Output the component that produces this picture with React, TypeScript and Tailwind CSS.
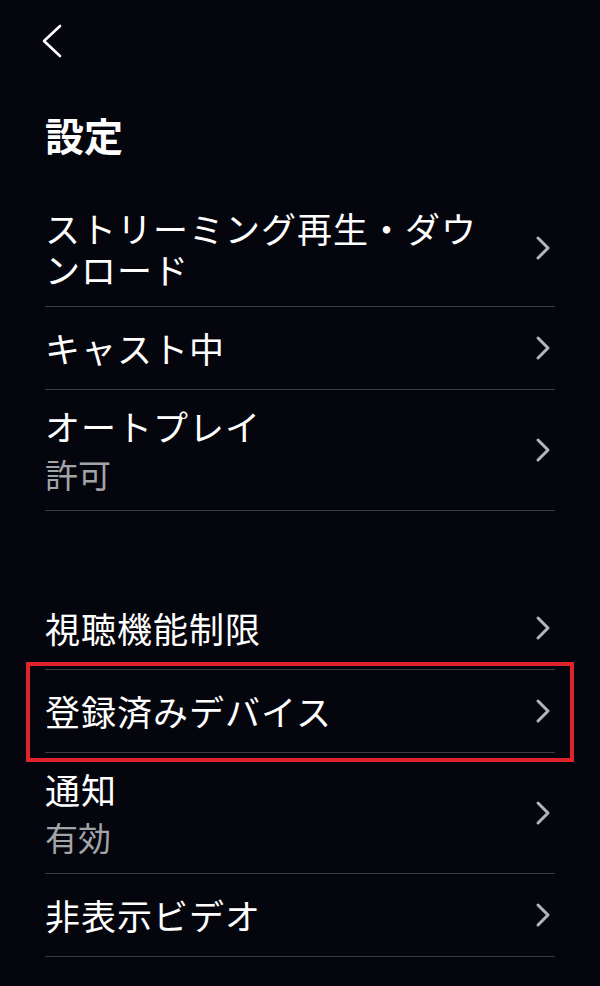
import type { ReactNode } from 'react';

type Row = {
  title: ReactNode;
  sub?: string;
  highlight?: boolean;
};

const groupA: Row[] = [
  { title: <>ストリーミング再生・ダウ<br />ンロード</> },
  { title: 'キャスト中' },
  { title: 'オートプレイ', sub: '許可' },
];

const groupB: Row[] = [
  { title: '視聴機能制限' },
  { title: '登録済みデバイス', highlight: true },
  { title: '通知', sub: '有効' },
  { title: '非表示ビデオ' },
];

function Chevron() {
  return (
    <svg width="16" height="26" viewBox="0 0 16 26" className="shrink-0 mr-[4px]" fill="none">
      <path d="M3 3 L13 13 L3 23" stroke="#b4b5b8" strokeWidth="3" strokeLinecap="round" strokeLinejoin="round" />
    </svg>
  );
}

function SettingRow({ row, first }: { row: Row; first?: boolean }) {
  const multi = !!row.sub;
  const pad = first ? 'pt-[16px] pb-[17px]' : multi ? 'py-[15px]' : 'pt-[20px] pb-[21px]';
  return (
    <div className="relative">
      <div className={`flex items-center justify-between border-b border-[#3a3c43] ${pad}`}>
        <div className="flex flex-col">
          <span className="text-[35px] leading-[41px] tracking-[1px] text-white">{row.title}</span>
          {row.sub && <span className="mt-2 text-[33px] leading-[41px] text-[#a3a4a8]">{row.sub}</span>}
        </div>
        <Chevron />
      </div>
      {row.highlight && (
        <div className="absolute -top-[8px] -bottom-[9px] -left-[19px] -right-[19px] border-4 border-[#e0222c] pointer-events-none" />
      )}
    </div>
  );
}

export default function App() {
  return (
    <div
      className="min-h-[986px] w-[600px] bg-[#05060d] px-[45px] overflow-hidden"
      style={{ fontFamily: '"Noto Sans CJK JP", "Noto Sans", sans-serif' }}
    >
      {/* Back */}
      <div className="pt-[24px] -ml-[3px]">
        <svg width="20" height="34" viewBox="0 0 20 34" fill="none">
          <path d="M18 2 L2 17 L18 32" stroke="white" strokeWidth="2.6" strokeLinecap="round" strokeLinejoin="round" />
        </svg>
      </div>

      <h1 className="mt-[57px] text-[39px] leading-[39px] font-bold text-white">設定</h1>

      <div className="mt-[37px]">
        {groupA.map((r, i) => (
          <SettingRow key={i} row={r} first={i === 0} />
        ))}
      </div>

      <div className="mt-[76px]">
        {groupB.map((r, i) => (
          <SettingRow key={i} row={r} />
        ))}
      </div>
    </div>
  );
}
